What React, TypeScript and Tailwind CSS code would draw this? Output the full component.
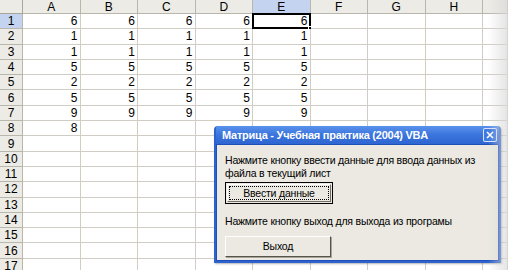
const cols = ["A", "B", "C", "D", "E", "F", "G", "H", ""];
const data: Record<number, (number | null)[]> = {
  1: [6, 6, 6, 6, 6],
  2: [1, 1, 1, 1, 1],
  3: [1, 1, 1, 1, 1],
  4: [5, 5, 5, 5, 5],
  5: [2, 2, 2, 2, 2],
  6: [5, 5, 5, 5, 5],
  7: [9, 9, 9, 9, 9],
  8: [8],
};
const rows = Array.from({ length: 17 }, (_, i) => i + 1);

const Sheet = () => {
  return (
    <div className="grid grid-cols-[23px_repeat(8,57.5px)_1fr] grid-rows-[14px_repeat(17,15.3px)] text-[12px] leading-none text-black">
      <div className="bg-[#ecebe5] border-r border-b border-[#a9a79c]" />
      {cols.map((c, i) => (
        <div
          key={"h" + i}
          className={
            "flex items-center justify-center border-r border-b border-[#b9b7ac] " +
            (c === "E" ? "bg-[#c4d3ef]" : "bg-[#ecebe5]")
          }
        >
          {c}
        </div>
      ))}
      {rows.map((r) => (
        <Row key={r} r={r} />
      ))}
    </div>
  );
};

const Row = ({ r }: { r: number }) => {
  const vals = data[r] || [];
  return (
    <>
      <div
        className={
          "flex items-center justify-center border-r border-b border-[#b9b7ac] " +
          (r === 1 ? "bg-[#c4d3ef]" : "bg-[#ecebe5]")
        }
      >
        {r}
      </div>
      {cols.map((_, i) => (
        <div
          key={i}
          className="relative flex items-center justify-end pr-[2px] border-r border-b border-[#cfcdc4] bg-white"
        >
          {vals[i] ?? ""}
          {r === 1 && i === 4 && (
            <div className="absolute -left-[1px] -top-[1px] -right-[1px] -bottom-[1px] border-2 border-black">
              <div className="absolute -right-[4px] -bottom-[4px] w-[5px] h-[5px] bg-black border border-white" />
            </div>
          )}
        </div>
      ))}
    </>
  );
};

const Dialog = () => {
  return (
    <div className="absolute left-[214px] top-[126px] w-[287px] h-[137px] flex flex-col bg-[#2e63cf] rounded-t-[4px] p-[2px] pt-0 shadow-[1px_1px_2px_rgba(0,0,0,0.3)]">
      <div className="h-[18px] flex items-center justify-between pl-[6px] pr-[2px] bg-gradient-to-b from-[#5a92ec] via-[#3a74dc] to-[#2f66d2]">
        <span className="text-white font-bold text-[11px] tracking-[-0.25px]">
          Матрица - Учебная практика (2004) VBA
        </span>
        <div className="w-[14px] h-[14px] flex items-center justify-center border border-white/80 rounded-[2px] bg-[#3f7ae0]">
          <svg width="8" height="8" viewBox="0 0 8 8">
            <path d="M1 1L7 7M7 1L1 7" stroke="white" strokeWidth="1.6" />
          </svg>
        </div>
      </div>
      <div className="flex-1 bg-[#ebe9e1] border border-[#1f4fb8] px-[8px] pt-[9px] text-[10.5px] leading-[12.5px] tracking-[-0.2px]">
        <p>Нажмите кнопку ввести данные для ввода данных из файла в текущий лист</p>
        <button className="mt-[3px] w-[108px] h-[22px] border border-black bg-[#ebe9e1] p-[1px]">
          <div className="w-full h-full border border-t-white border-l-white border-b-[#716f64] border-r-[#716f64] p-[1px]">
            <div className="w-full h-full flex items-center justify-center border border-dotted border-black">
              Ввести данные
            </div>
          </div>
        </button>
        <p className="mt-[11px]">Нажмите кнопку выход для выхода из програмы</p>
        <button className="mt-[8px] w-[106px] h-[21px] flex items-center justify-center bg-[#ebe9e1] border border-t-white border-l-white border-b-[#55534a] border-r-[#55534a] shadow-[1px_1px_0_#a7a599]">
          Выход
        </button>
      </div>
    </div>
  );
};

export default function App() {
  return (
    <div
      className="relative w-[508px] h-[270px] overflow-hidden bg-white"
      style={{ fontFamily: '"Liberation Sans", Arial, sans-serif' }}
    >
      <Sheet />
      <Dialog />
      <div className="absolute right-0 top-0 w-[20px] h-full bg-gradient-to-r from-transparent to-[#d8d8d8]/70" />
    </div>
  );
}
